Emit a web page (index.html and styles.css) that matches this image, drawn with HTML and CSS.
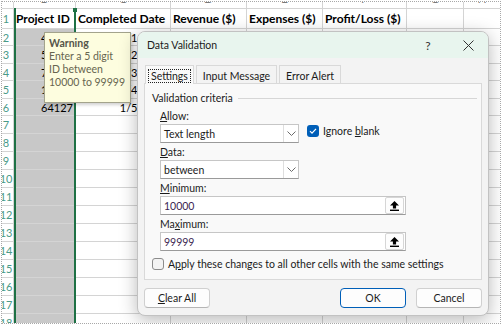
FILE: index.html
```html
<!DOCTYPE html>
<html lang="en">
<head>
  <meta charset="UTF-8">
  <meta name="viewport" content="width=device-width, initial-scale=1.0">
  <title>Data Validation</title>
  <link rel="stylesheet" href="styles.css">
</head>
<body>
  <div class="frame">
    <div class="sheet"></div>
    <div class="selection"></div>

    <div class="tip">
      <b>Warning</b><br>
      Enter a 5 digit<br>
      ID between<br>
      10000 to 99999
    </div>

    <div class="dialog">
      <div class="titlebar">
        <span class="title">Data Validation</span>
        <span class="ctl">?</span>
        <span class="ctl">
          <svg width="11" height="11" viewBox="0 0 11 11"><path d="M.5.5l10 10M10.5.5l-10 10" stroke="#333" stroke-width="1" fill="none"/></svg>
        </span>
      </div>

      <div class="dlg-body">
        <div class="tabs">
          <div class="tab active"><span class="focus">Settings</span></div>
          <div class="tab">Input Message</div>
          <div class="tab">Error Alert</div>
        </div>

        <div class="panel">
          <div class="group">Validation criteria</div>

          <div class="field">
            <div class="label"><u>A</u>llow:</div>
            <div class="line">
              <div class="combo">
                <span class="value">Text length</span>
                <span class="arrow"><svg width="9" height="5" viewBox="0 0 9 5"><path d="M.5.5l4 4 4-4" stroke="#6b6b6b" fill="none"/></svg></span>
              </div>
              <div class="check">
                <span class="box on"><svg width="12" height="12" viewBox="0 0 12 12"><path d="M3 6.2l2 2 4-4.4" stroke="#fff" stroke-width="1.2" fill="none"/></svg></span>
                <span>Ignore <u>b</u>lank</span>
              </div>
            </div>
          </div>

          <div class="field">
            <div class="label"><u>D</u>ata:</div>
            <div class="combo">
              <span class="value">between</span>
              <span class="arrow"><svg width="9" height="5" viewBox="0 0 9 5"><path d="M.5.5l4 4 4-4" stroke="#6b6b6b" fill="none"/></svg></span>
            </div>
          </div>

          <div class="field">
            <div class="label"><u>M</u>inimum:</div>
            <div class="input">
              <span class="value num">10000</span>
              <span class="range"><svg width="9" height="10" viewBox="0 0 9 10"><path d="M4.5 0L9 4.4H6.1V7.4H2.9V4.4H0Z"/><rect y="8.6" width="9" height="1.4"/></svg></span>
            </div>
          </div>

          <div class="field">
            <div class="label">Ma<u>x</u>imum:</div>
            <div class="input">
              <span class="value num">99999</span>
              <span class="range"><svg width="9" height="10" viewBox="0 0 9 10"><path d="M4.5 0L9 4.4H6.1V7.4H2.9V4.4H0Z"/><rect y="8.6" width="9" height="1.4"/></svg></span>
            </div>
          </div>

          <div class="check apply">
            <span class="box"></span>
            <span>A<u>p</u>ply these changes to all other cells with the same settings</span>
          </div>
        </div>

        <div class="buttons">
          <button class="btn"><u>C</u>lear All</button>
          <button class="btn ok">OK</button>
          <button class="btn">Cancel</button>
        </div>
      </div>
    </div>
  </div>

  <script>
    const sheet = document.querySelector(".sheet");
    const letters = ["", "B", "C", "D", "E", "F", "G", "H"];
    const rows = [
      ["1", "Project ID", "Completed Date", "Revenue ($)", "Expenses ($)", "Profit/Loss ($)", "", ""],
      ["2", "45213", "1/1/2023", "", "", "", "", ""],
      ["3", "51890", "1/2/2023", "", "", "", "", ""],
      ["4", "73456", "1/3/2023", "", "", "", "", ""],
      ["5", "12678", "1/4/2023", "", "", "", "", ""],
      ["6", "64127", "1/5/2023", "", "", "", "", ""]
    ];
    for (let r = 7; r <= 18; r++) {
      rows.push([String(r), "", "", "", "", "", "", ""]);
    }

    // column letters, only their lower edge shows
    letters.forEach(l => {
      const cell = document.createElement("div");
      cell.className = "cell colhead";
      cell.innerHTML = `<span>${l}</span>`;
      sheet.appendChild(cell);
    });

    rows.forEach((row, i) => {
      row.forEach((val, j) => {
        const cell = document.createElement("div");
        cell.className = "cell";
        if (j === 0) cell.classList.add("rowhead");
        else if (i === 0) cell.classList.add("head");
        if (j === 1 && i > 0) cell.classList.add("sel");
        cell.textContent = val;
        sheet.appendChild(cell);
      });
    });
  </script>
</body>
</html>
```

FILE: styles.css
```css
* {
  box-sizing: border-box;
}
body {
  margin: 0;
  background: #fff;
  font-family: Lato, "Liberation Sans", sans-serif;
}
.frame {
  position: relative;
  width: 500px;
  height: 323px;
  margin: 1px;
  border: 1px dotted #a8a8a8;
  overflow: hidden;
}

/* spreadsheet */
.sheet {
  display: grid;
  grid-template-columns: 11px 61px 94px 75px 75px 83px 56px 36px;
  grid-template-rows: 6px 19px 16px 17px 16px 17px 16px repeat(12, 17px);
  gap: 1px;
  background: #d4d4d4;
  font-size: 11px;
  color: #000;
}
.cell {
  background: #fff;
  white-space: nowrap;
  overflow: hidden;
  display: flex;
  align-items: center;
  justify-content: flex-end;
  padding: 0 2px;
}
.colhead {
  align-items: flex-start;
  justify-content: center;
  color: #7a7a7a;
  font-size: 12px;
}
.colhead span {
  margin-top: -9px;
  line-height: 12px;
}
.rowhead {
  justify-content: center;
  padding: 0 3px 0 0;
  color: #4a9a88;
}
.head {
  justify-content: flex-start;
  font-weight: 700;
  font-size: 12px;
  padding-left: 2px;
}
.sel {
  background: #c8c8c8;
}
.selection {
  position: absolute;
  left: 12px;
  top: 6px;
  width: 62px;
  height: 330px;
  border-left: 2px solid #1e7145;
  border-right: 2px solid #1e7145;
}
.selection::after {
  content: "";
  position: absolute;
  right: -3px;
  top: 0;
  width: 4px;
  height: 4px;
  background: #1e7145;
}

/* input message tooltip */
.tip {
  position: absolute;
  left: 42px;
  top: 30px;
  width: 87px;
  height: 71px;
  padding: 4px 4px;
  background: #fdfddf;
  border: 1px solid #a3a38c;
  box-shadow: 2px 2px 3px rgba(0, 0, 0, 0.18);
  font-size: 10.5px;
  line-height: 13px;
  color: #67654f;
}
.tip b {
  color: #55554a;
}

/* dialog */
.dialog {
  position: absolute;
  left: 135px;
  top: 29px;
  width: 352px;
  background: #f3f3f3;
  border: 1px solid #c2c2c2;
  border-radius: 8px;
  box-shadow: 0 4px 18px rgba(0, 0, 0, 0.28);
  overflow: hidden;
  font-size: 10.5px;
  color: #1b1b1b;
}
.titlebar {
  height: 26px;
  display: flex;
  align-items: center;
  padding-left: 9px;
  background: #e8f5ee;
  font-size: 10.5px;
}
.title {
  flex: 1;
}
.ctl {
  width: 40px;
  display: flex;
  justify-content: center;
  font-size: 12px;
  color: #333;
}
.dlg-body {
  padding: 7px 6px 7px 6px;
}
.tabs {
  display: flex;
  gap: 2px;
  padding-left: 1px;
}
.tab {
  height: 18px;
  padding: 2px 6px 0;
  display: flex;
  align-items: center;
  border: 1px solid #d9d9d9;
  border-bottom: none;
  background: #f3f3f3;
}
.tab.active {
  background: #f9f9f9;
  margin-bottom: -1px;
  height: 19px;
  padding: 1px 3px 0;
  position: relative;
}
.focus {
  outline: 1px dotted #222;
  padding: 0 2px;
  line-height: 12px;
}
.panel {
  background: #f9f9f9;
  border: 1px solid #d9d9d9;
  padding: 7px 4px 8px 7px;
}
.group {
  display: flex;
  align-items: center;
  line-height: 14px;
}
.group::after {
  content: "";
  flex: 1;
  border-top: 1px solid #d6d6d6;
  margin-left: 5px;
}
.field {
  margin: 4px 0 0 8px;
}
.field + .field {
  margin-top: 2px;
}
.label {
  line-height: 14px;
  margin-bottom: 1px;
}
u {
  text-underline-offset: 1px;
}
.line {
  display: flex;
  align-items: flex-start;
  gap: 8px;
}
.combo, .input {
  height: 19px;
  display: flex;
  align-items: stretch;
  background: #fff;
  border: 1px solid #c6c6c6;
  border-bottom-color: #9a9a9a;
}
.combo {
  width: 139px;
}
.input {
  width: 246px;
}
.value {
  flex: 1;
  display: flex;
  align-items: center;
  padding-left: 3px;
}
.num {
  color: #3b1f52;
}
.arrow {
  width: 15px;
  display: flex;
  align-items: center;
  justify-content: center;
  border-left: 1px solid #dedede;
}
.range {
  width: 19px;
  display: flex;
  align-items: center;
  justify-content: center;
  border: 1px solid #d6d6d6;
  margin: 0 1px 0 0;
  background: #fdfdfd;
  border-radius: 2px;
}
.check {
  display: flex;
  align-items: center;
  gap: 4px;
  line-height: 14px;
}
.box {
  width: 12px;
  height: 12px;
  border-radius: 3px;
  border: 1px solid #8b8b8b;
  background: #f3f3f3;
  display: flex;
}
.box.on {
  border: none;
  background: #005fb8;
}
.apply {
  margin-top: 6px;
}
.buttons {
  display: flex;
  gap: 10px;
  margin-top: 8px;
}
.btn {
  width: 66px;
  height: 20px;
  padding: 0;
  font: inherit;
  color: #1b1b1b;
  background: #fdfdfd;
  border: 1px solid #d0d0d0;
  border-bottom-color: #b5b5b5;
  border-radius: 4px;
}
.btn:first-child {
  margin-right: auto;
}
.btn.ok {
  border: 1px solid #005fb8;
}
```
